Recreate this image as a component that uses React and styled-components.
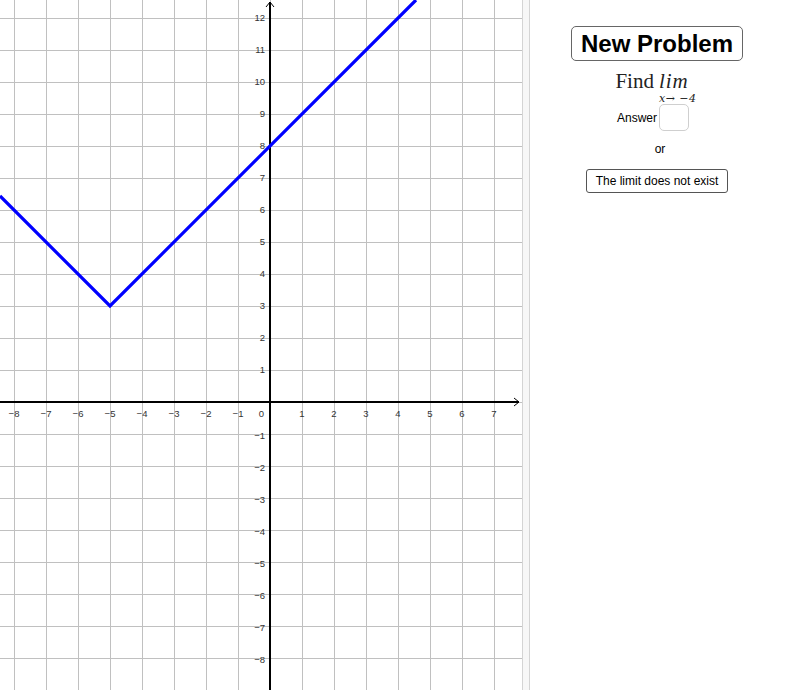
import styled, { createGlobalStyle } from 'styled-components';

const GlobalStyle = createGlobalStyle`
  html, body {
    margin: 0;
    padding: 0;
    background: #ffffff;
    font-family: "Liberation Sans", Arial, sans-serif;
  }
`;

const UNIT = 32;
const OX = 270;
const OY = 402;
const W = 522;
const H = 690;

const px = (x) => OX + x * UNIT;
const py = (y) => OY - y * UNIT;

const App = () => {
  return (
    <Page>
      <GlobalStyle />
      <GraphArea>
        <Graph />
      </GraphArea>
      <Divider />
      <Panel>
        <BigButton>New Problem</BigButton>
        <FindRow>
          <FindWord>Find</FindWord>
          <LimStack>
            <LimWord>lim</LimWord>
            <LimSub>x→ −4</LimSub>
          </LimStack>
        </FindRow>
        <AnswerRow>
          <SmallText>Answer</SmallText>
          <AnswerBox />
        </AnswerRow>
        <OrText>or</OrText>
        <SmallButton>The limit does not exist</SmallButton>
      </Panel>
    </Page>
  );
};

export default App;

const Graph = () => {
  const vLines = [];
  for (let k = -8; k <= 7; k++) vLines.push(k);
  const hLines = [];
  for (let k = -8; k <= 12; k++) hLines.push(k);

  // y = |x + 5| + 3, clipped to the view
  const leftX = -OX / UNIT;
  const topY = OY / UNIT;
  const pts = [
    [px(leftX), py(Math.abs(leftX + 5) + 3)],
    [px(-5), py(3)],
    [px(topY - 8), py(topY)],
  ];

  return (
    <svg width={W} height={H} viewBox={`0 0 ${W} ${H}`}>
      {vLines.map((k) => (
        <line key={'v' + k} x1={px(k)} y1={0} x2={px(k)} y2={H} stroke="#c0c0c0" strokeWidth="1" shapeRendering="crispEdges" />
      ))}
      {hLines.map((k) => (
        <line key={'h' + k} x1={0} y1={py(k)} x2={W} y2={py(k)} stroke="#c0c0c0" strokeWidth="1" shapeRendering="crispEdges" />
      ))}

      {/* axes */}
      <line x1={0} y1={OY} x2={W - 3} y2={OY} stroke="#000" strokeWidth="1.3" shapeRendering="crispEdges" />
      <line x1={OX} y1={2} x2={OX} y2={H} stroke="#000" strokeWidth="1.3" shapeRendering="crispEdges" />
      <polyline points={`${W - 8},${OY - 4} ${W - 3},${OY} ${W - 8},${OY + 4}`} fill="none" stroke="#000" strokeWidth="1" />
      <polyline points={`${OX - 4},${7} ${OX},${2} ${OX + 4},${7}`} fill="none" stroke="#000" strokeWidth="1" />

      {/* x labels */}
      {vLines.map((k) =>
        k === 0 ? null : (
          <text key={'xl' + k} x={px(k)} y={OY + 15} fontSize="9.5" fill="#333" textAnchor="middle" fontFamily="Liberation Sans, Arial, sans-serif">
            {k < 0 ? `−${-k}` : k}
          </text>
        )
      )}
      <text x={OX - 6} y={OY + 15} fontSize="9.5" fill="#333" textAnchor="end" fontFamily="Liberation Sans, Arial, sans-serif">0</text>

      {/* y labels */}
      {hLines.map((k) =>
        k === 0 ? null : (
          <text key={'yl' + k} x={OX - 5} y={py(k) + (k < 0 ? 5 : 3)} fontSize="9.5" fill="#333" textAnchor="end" fontFamily="Liberation Sans, Arial, sans-serif">
            {k < 0 ? `−${-k}` : k}
          </text>
        )
      )}

      <polyline points={pts.map((p) => p.join(',')).join(' ')} fill="none" stroke="#0000ff" strokeWidth="3.2" strokeLinejoin="miter" />
    </svg>
  );
};

const Page = styled.div`
  display: flex;
  flex-direction: row;
  width: 800px;
  height: 690px;
  overflow: hidden;
`;

const GraphArea = styled.div`
  width: ${W}px;
  height: ${H}px;
  flex-shrink: 0;

  svg {
    display: block;
  }
`;

const Divider = styled.div`
  width: 6px;
  height: 100%;
  flex-shrink: 0;
  background-color: #f7f7f7;
  border-left: 1px solid #d4d4d4;
  border-right: 1px solid #d4d4d4;
`;

const Panel = styled.div`
  flex: 1;
  display: flex;
  flex-direction: column;
  align-items: center;
  padding: 26px 16px 0 0;
`;

const BigButton = styled.button`
  height: 35px;
  padding: 0 9px;
  background: #ffffff;
  border: 1px solid #666666;
  border-radius: 5px;
  font-family: "Liberation Sans", Arial, sans-serif;
  font-weight: 700;
  font-size: 24px;
  color: #000000;
  cursor: pointer;
`;

const FindRow = styled.div`
  display: flex;
  flex-direction: row;
  align-items: flex-start;
  gap: 5px;
  margin-top: 9px;
  margin-right: 2px;
  font-family: "Liberation Serif", "Times New Roman", serif;
  color: #222;
`;

const FindWord = styled.span`
  font-size: 21px;
  line-height: 23px;
`;

const LimStack = styled.div`
  display: flex;
  flex-direction: column;
  align-items: flex-start;
`;

const LimWord = styled.span`
  font-size: 21px;
  line-height: 23px;
  font-style: italic;
  letter-spacing: 1px;
`;

const LimSub = styled.span`
  font-family: "DejaVu Serif", "Liberation Serif", serif;
  font-size: 11px;
  line-height: 11px;
  font-style: italic;
  letter-spacing: 0.5px;
  white-space: nowrap;
`;

const AnswerRow = styled.div`
  display: flex;
  flex-direction: row;
  align-items: center;
  gap: 2px;
  margin-top: 0;
  margin-right: 8px;
`;

const SmallText = styled.span`
  font-size: 12px;
  color: #000;
`;

const AnswerBox = styled.div`
  width: 28px;
  height: 25px;
  border: 1px solid #cfcfcf;
  border-radius: 5px;
  background: #fff;
`;

const OrText = styled(SmallText)`
  margin-top: 11px;
  margin-left: 6px;
`;

const SmallButton = styled.button`
  margin-top: 13px;
  height: 24px;
  padding: 0 9px;
  background: #ffffff;
  border: 1px solid #555555;
  border-radius: 3px;
  font-family: "Liberation Sans", Arial, sans-serif;
  font-size: 12px;
  color: #000;
  cursor: pointer;
`;
